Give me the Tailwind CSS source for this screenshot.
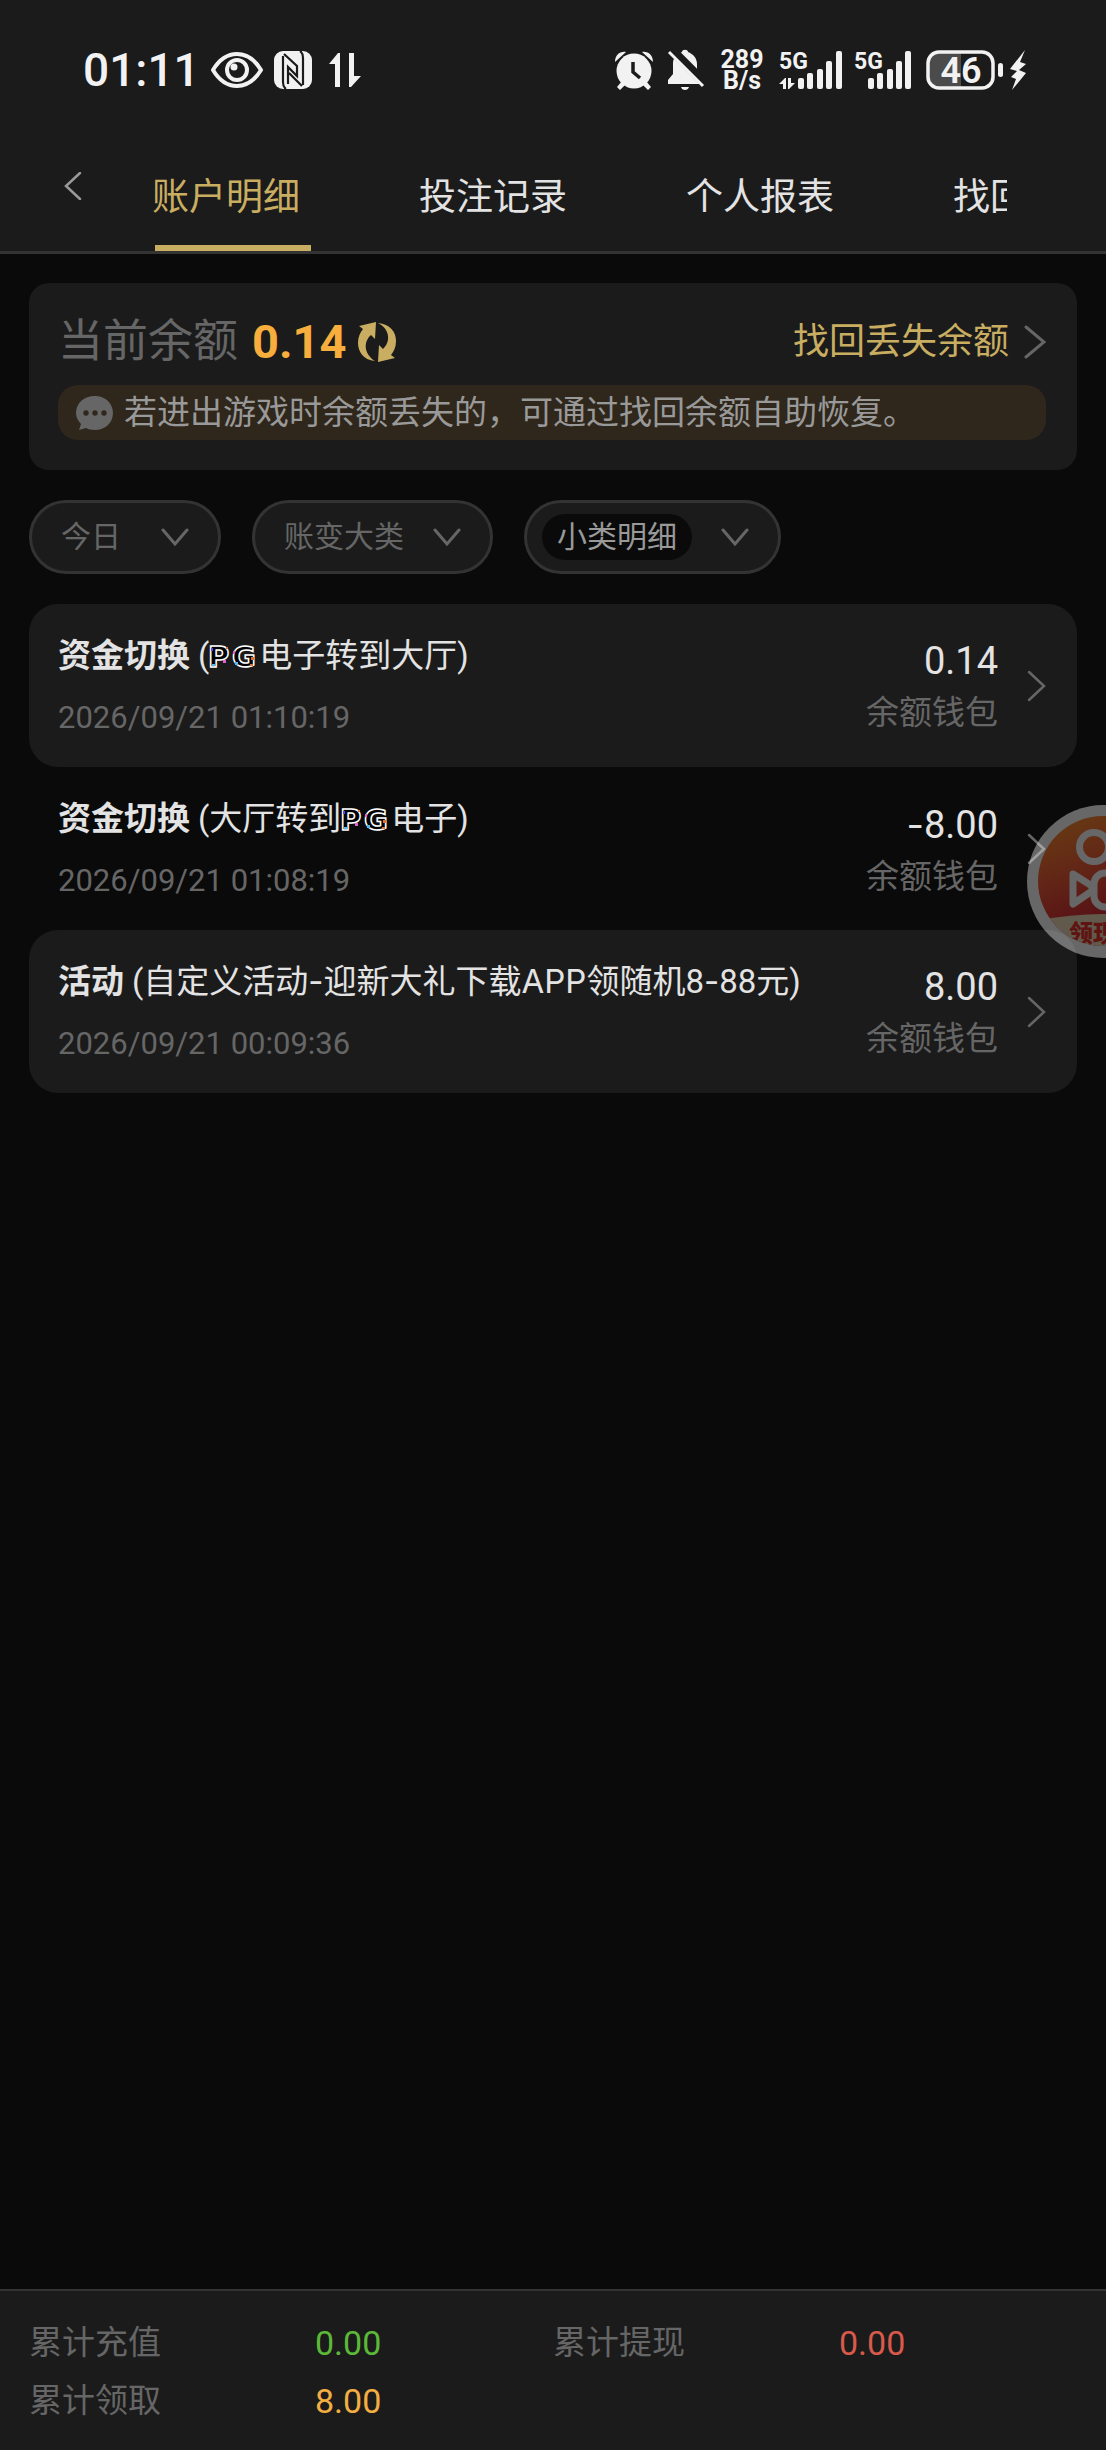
<!DOCTYPE html>
<html lang="zh-CN">
<head>
<meta charset="utf-8">
<meta name="viewport" content="width=device-width, initial-scale=1">
<title>账户明细</title>
<script src="https://cdn.jsdelivr.net/npm/@tailwindcss/browser@4"></script>
</head>
<body class="bg-[#0a0a0a]">
<div class="relative flex min-h-screen flex-col overflow-hidden bg-[#0a0a0a] font-['Roboto','Noto_Sans_CJK_SC',sans-serif] text-[#e3e3e3]">

  <header class="border-b-3 border-[#333333] bg-[#1b1b1b]">
    <!-- Status bar -->
    <div class="flex h-[120px] items-center justify-between pt-[20px] pr-[79px] pl-[83px] text-[#f2f2f2]">
      <div class="flex items-center">
        <span class="w-[128px] text-[46px] leading-[48px] font-medium">01:11</span>
        <svg class="h-[38px] w-[52px]" viewBox="0 0 52 38" fill="none" stroke="currentColor">
          <path d="M2 19C8 9 16 3 26 3s18 6 24 16c-6 10-14 16-24 16S8 29 2 19z" stroke-width="4"/>
          <circle cx="26" cy="19" r="10" stroke-width="4"/>
          <circle cx="23" cy="16" r="3.5" fill="currentColor" stroke="none"/>
        </svg>
        <svg class="ml-[11px] h-[38px] w-[38px]" viewBox="0 0 38 38">
          <rect width="38" height="38" rx="9" fill="currentColor"/>
          <path d="M12 38C9 36 9 34 9 31V5M10 3l13 12v10L14 16v17M26 0c3 2 3 4 3 7v27M28 35L15 22" fill="none" stroke="#1b1b1b" stroke-width="2.200"/>
        </svg>
        <svg class="ml-[17px] h-[36px] w-[32px]" viewBox="0 0 32 36" fill="currentColor">
          <path d="M11 35H6V12H0L9 1h2zM20 1h5v23h7L22 35h-2z"/>
        </svg>
      </div>
      <div class="flex items-center">
        <svg class="h-[40px] w-[38px]" viewBox="0 0 38 40">
          <g fill="currentColor"><circle cx="19" cy="21" r="17.500"/><path d="M7 31l-5 6 3 3 6-6zM31 31l5 6-3 3-6-6zM0 12C0 5 5 1 11 2zM38 12C38 5 33 1 27 2z"/></g>
          <path d="M18 12v10l7 6" fill="none" stroke="#1b1b1b" stroke-width="3.500"/>
        </svg>
        <svg class="ml-[14px] h-[42px] w-[38px]" viewBox="0 0 38 42">
          <g fill="currentColor"><path d="M15 3c0-3 6-3 6 0 5 2 9 6 9 12v10l5 6v4H1v-4l5-6V14c0-5 4-9 9-11zM14 38h8c-1 4-7 4-8 0z"/></g>
          <path d="M4 0l35 35" stroke="#1b1b1b" stroke-width="9"/>
          <path d="M2 3l34 34" stroke="currentColor" stroke-width="3"/>
        </svg>
        <div class="ml-[14px] flex w-[46px] flex-col text-center text-[25px] leading-[21px] font-bold"><span>289</span><span>B/s</span></div>
        <svg class="ml-[14px] h-[40px] w-[64px] overflow-visible" viewBox="0 0 64 40" fill="currentColor">
          <text x="0" y="19" font-size="23" font-weight="700">5G</text>
          <path d="M7 39H4v-5H0l6-6h1zM9 28h3v5h4l-6 6H9z"/>
          <rect x="19" y="28" width="6" height="11" rx="2"/><rect x="28" y="23" width="6" height="16" rx="2"/><rect x="38" y="19" width="6" height="20" rx="2"/><rect x="47" y="11" width="6" height="28" rx="2"/><rect x="57" y="1" width="6" height="38" rx="2"/>
        </svg>
        <svg class="ml-[11px] h-[40px] w-[59px] overflow-visible" viewBox="0 0 59 40" fill="currentColor">
          <text x="0" y="19" font-size="23" font-weight="700">5G</text>
          <rect x="14" y="28" width="6" height="11" rx="2"/><rect x="23" y="23" width="6" height="16" rx="2"/><rect x="33" y="19" width="6" height="20" rx="2"/><rect x="42" y="11" width="6" height="28" rx="2"/><rect x="51" y="1" width="6" height="38" rx="2"/>
        </svg>
        <svg class="ml-[13px] h-[40px] w-[78px] overflow-visible" viewBox="0 0 78 40" fill="currentColor">
          <path d="M35 3v34H14C7 37 3 33 3 26V14C3 7 7 3 14 3z" fill="#4b4b4b"/>
          <rect x="2" y="2" width="65" height="36" rx="11" fill="none" stroke="currentColor" stroke-width="3.500"/>
          <rect x="72" y="13" width="5" height="14" rx="2.500"/>
          <text x="35" y="33" font-size="36" font-weight="600" text-anchor="middle">46</text>
        </svg>
        <svg class="ml-[6px] h-[40px] w-[17px]" viewBox="0 0 17 40" fill="currentColor"><path d="M15 0L0 19l7 2-6 6 5 2L2 40l14-17-7-3 7-6-6-2z"/></svg>
      </div>
    </div>
    <!-- Tabs -->
    <div class="flex h-[131px] pr-[99px]">
      <button type="button" aria-label="返回" class="flex w-[152px] shrink-0 items-center pl-[64px] text-[#999999]">
        <svg class="h-[28px] w-[18px]" viewBox="0 0 18 28" fill="none" stroke="currentColor" stroke-width="2.500" stroke-linecap="round"><path d="M16 1L2 14l14 13"/></svg>
      </button>
      <nav class="flex flex-1 gap-[119px] overflow-hidden text-[37px] leading-[48px] whitespace-nowrap">
        <a href="#" aria-current="page" class="relative flex shrink-0 items-center pt-[24px] text-[#c9ae62]">账户明细<span class="absolute bottom-0 left-[3px] h-[6px] w-[156px] bg-[#c9ae62]"></span></a>
        <a href="#" class="flex shrink-0 items-center pt-[24px]">投注记录</a>
        <a href="#" class="flex shrink-0 items-center pt-[24px]">个人报表</a>
        <a href="#" class="flex shrink-0 items-center pt-[24px]">找回余额</a>
      </nav>
    </div>
  </header>

  <main class="flex flex-col gap-[30px] p-[29px]">
    <!-- Balance -->
    <section class="rounded-[20px] bg-[#1b1b1b] pt-[30px] pr-[31px] pb-[30px] pl-[29px]">
      <div class="flex h-[58px] items-center">
        <h1 class="text-[45px] leading-[58px] text-[#666666]">当前余额</h1>
        <span class="ml-[14px] text-[47px] leading-[58px] font-bold text-[#f7ae3d]">0.14</span>
        <button type="button" aria-label="刷新余额" class="ml-[11px] text-[#c9ae62]">
          <svg class="h-[40px] w-[38px]" viewBox="0 0 38 40" fill="currentColor">
            <path d="M18 0l-1 17-4-4C5 20 6 32 17 39 5 38 0 29 0 21 0 15 2 11 5 7L1 4z"/>
            <path d="M20 40l1-17 4 4c8-7 7-20-5-26 12 1 18 9 18 18 0 6-2 10-5 14l4 3z"/>
          </svg>
        </button>
        <a href="#" class="ml-auto flex items-center gap-[15px] text-[36px] leading-[48px] text-[#c9ae62]">找回丢失余额
          <svg class="h-[34px] w-[22px] text-[#666666]" viewBox="0 0 22 34" fill="none" stroke="currentColor" stroke-width="3" stroke-linecap="round"><path d="M2 2l18 15L2 32"/></svg>
        </a>
      </div>
      <p class="mt-[14px] flex h-[55px] items-center rounded-[20px] bg-[#2f271b] pl-[18px] text-[33px] leading-[48px] text-[#999999]">
        <svg class="mr-[11px] h-[34px] w-[37px] shrink-0" viewBox="0 0 37 34"><path d="M19 0c10 0 18 7 18 17s-8 17-18 17c-4 0-7-1-9-2l-7 2 2-6C2 25 0 21 0 17 0 7 8 0 19 0z" fill="#666666"/><g fill="#2f271b"><circle cx="10" cy="17" r="2.700"/><circle cx="19" cy="17" r="2.700"/><circle cx="28" cy="17" r="2.700"/></g></svg>
        若进出游戏时余额丢失的，可通过找回余额自助恢复。
      </p>
    </section>

    <!-- Filters -->
    <div class="flex gap-[31px] text-[30px] leading-[46px] text-[#666666]">
      <button type="button" class="flex h-[74px] w-[192px] items-center justify-between rounded-[37px] border-3 border-[#333333] bg-[#1b1b1b] pr-[29px] pl-[29px]">今日
        <svg class="h-[18px] w-[28px]" viewBox="0 0 28 18" fill="none" stroke="currentColor" stroke-width="3" stroke-linecap="round"><path d="M2 2l12 14L26 2"/></svg></button>
      <button type="button" class="flex h-[74px] w-[241px] items-center justify-between rounded-[37px] border-3 border-[#333333] bg-[#1b1b1b] pr-[29px] pl-[29px]">账变大类
        <svg class="h-[18px] w-[28px]" viewBox="0 0 28 18" fill="none" stroke="currentColor" stroke-width="3" stroke-linecap="round"><path d="M2 2l12 14L26 2"/></svg></button>
      <button type="button" class="flex h-[74px] w-[257px] items-center justify-between rounded-[37px] border-3 border-[#333333] bg-[#1b1b1b] pr-[29px] pl-[15px]"><span class="rounded-[23px] bg-[#0a0a0a] px-[15px] text-[#999999]">小类明细</span>
        <svg class="h-[18px] w-[28px]" viewBox="0 0 28 18" fill="none" stroke="currentColor" stroke-width="3" stroke-linecap="round"><path d="M2 2l12 14L26 2"/></svg></button>
    </div>

    <!-- Records -->
    <ul class="flex flex-col">
      <li>
        <a href="#" class="flex h-[163px] items-center rounded-[29px] bg-[#1b1b1b] pr-[31px] pl-[29px]">
          <div class="flex flex-1 flex-col gap-[14px] pt-[2px]">
            <div class="flex items-center text-[33px] leading-[48px]"><b class="mr-[8px]">资金切换</b>(<svg class="mr-[2px] h-[26px] w-[48px] overflow-visible font-['DejaVu_Sans']" viewBox="0 0 48 26" role="img" aria-label="PG" fill="#000" stroke="#fff" stroke-width="1.500" font-size="29" font-weight="700"><text x="-1" y="24">P</text><text x="23" y="24">G</text><g stroke="none"><path d="M2 5h2v3H2z" fill="#6a3de8"/><path d="M14 17h3v3h-3zM24 8h2v3h-2z" fill="#e060d8"/><path d="M42 14h3v3h-3zM41 21h3v2h-3zM17 4h2v2h-2z" fill="#e0703a"/><path d="M3 21h3v2H3zM26 19h3v3h-3z" fill="#58b8e8"/></g></svg>电子转到大厅)</div>
            <time class="text-[31px] leading-[48px] text-[#666666]">2026/09/21 01:10:19</time>
          </div>
          <div class="flex flex-col pt-[3px] text-right">
            <span class="text-[38px] leading-[52px]">0.14</span>
            <span class="text-[33px] leading-[52px] text-[#666666]">余额钱包</span>
          </div>
          <svg class="ml-[29px] h-[32px] w-[19px] text-[#666666]" viewBox="0 0 19 32" fill="none" stroke="currentColor" stroke-width="2.500" stroke-linecap="round"><path d="M2 2l15 14L2 30"/></svg>
        </a>
      </li>
      <li>
        <a href="#" class="flex h-[163px] items-center rounded-[29px] pr-[31px] pl-[29px]">
          <div class="flex flex-1 flex-col gap-[14px] pt-[2px]">
            <div class="flex items-center text-[33px] leading-[48px]"><b class="mr-[8px]">资金切换</b>(大厅转到<svg class="mr-[2px] h-[26px] w-[48px] overflow-visible font-['DejaVu_Sans']" viewBox="0 0 48 26" role="img" aria-label="PG" fill="#000" stroke="#fff" stroke-width="1.500" font-size="29" font-weight="700"><text x="-1" y="24">P</text><text x="23" y="24">G</text><g stroke="none"><path d="M2 5h2v3H2z" fill="#6a3de8"/><path d="M14 17h3v3h-3zM24 8h2v3h-2z" fill="#e060d8"/><path d="M42 14h3v3h-3zM41 21h3v2h-3zM17 4h2v2h-2z" fill="#e0703a"/><path d="M3 21h3v2H3zM26 19h3v3h-3z" fill="#58b8e8"/></g></svg>电子)</div>
            <time class="text-[31px] leading-[48px] text-[#666666]">2026/09/21 01:08:19</time>
          </div>
          <div class="flex flex-col pt-[3px] text-right">
            <span class="text-[38px] leading-[52px]"><span class="font-['Inter']">-</span>8.00</span>
            <span class="text-[33px] leading-[52px] text-[#666666]">余额钱包</span>
          </div>
          <svg class="ml-[29px] h-[32px] w-[19px] text-[#666666]" viewBox="0 0 19 32" fill="none" stroke="currentColor" stroke-width="2.500" stroke-linecap="round"><path d="M2 2l15 14L2 30"/></svg>
        </a>
      </li>
      <li>
        <a href="#" class="flex h-[163px] items-center rounded-[29px] bg-[#1b1b1b] pr-[31px] pl-[29px]">
          <div class="flex flex-1 flex-col gap-[14px] pt-[2px]">
            <div class="text-[33px] leading-[48px]"><b class="mr-[8px]">活动</b>(自定义活动<span class="font-['Inter']">-</span>迎新大礼下载<span class="font-['Inter']">APP</span>领随机8<span class="font-['Inter']">-</span>88元)</div>
            <time class="text-[31px] leading-[48px] text-[#666666]">2026/09/21 00:09:36</time>
          </div>
          <div class="flex flex-col pt-[3px] text-right">
            <span class="text-[38px] leading-[52px]">8.00</span>
            <span class="text-[33px] leading-[52px] text-[#666666]">余额钱包</span>
          </div>
          <svg class="ml-[29px] h-[32px] w-[19px] text-[#666666]" viewBox="0 0 19 32" fill="none" stroke="currentColor" stroke-width="2.500" stroke-linecap="round"><path d="M2 2l15 14L2 30"/></svg>
        </a>
      </li>
    </ul>
  </main>

  <!-- Totals -->
  <footer class="mt-auto border-t-2 border-[#333333] bg-[#1b1b1b] px-[29px] pt-[23px] pb-[20px]">
    <dl class="grid grid-cols-2 text-[33px] leading-[58px]">
      <div class="flex"><dt class="w-[286px] text-[#666666]">累计充值</dt><dd class="text-[34px] text-[#5cb838]">0.00</dd></div>
      <div class="flex"><dt class="w-[286px] text-[#666666]">累计提现</dt><dd class="text-[34px] text-[#d9594a]">0.00</dd></div>
      <div class="flex"><dt class="w-[286px] text-[#666666]">累计领取</dt><dd class="text-[34px] text-[#f2ae42]">8.00</dd></div>
    </dl>
  </footer>

  <!-- Floating promo badge -->
  <button type="button" aria-label="领现金" class="absolute top-[805px] -right-[74px] opacity-38">
    <svg class="h-[153px] w-[153px]" viewBox="0 0 153 153">
      <defs>
        <linearGradient id="promo" x1="0.1" y1="0" x2="0.4" y2="0.75"><stop offset="0" stop-color="#ff9a20"/><stop offset="0.5" stop-color="#f5602a"/><stop offset="1" stop-color="#d81f2a"/></linearGradient>
        <clipPath id="disc"><circle cx="76" cy="76" r="65"/></clipPath>
      </defs>
      <circle cx="76.500" cy="76.500" r="76.500" fill="#fff"/>
      <g clip-path="url(#disc)">
        <rect width="153" height="153" fill="url(#promo)"/>
        <path d="M0 118Q76 100 153 118V153H0z" fill="#efdcb8"/>
        <text x="42" y="137" font-size="24" font-weight="900" fill="#e8281e">领现金</text>
      </g>
      <g fill="none" stroke="#fff" stroke-width="7" stroke-linejoin="round">
        <circle cx="67" cy="42" r="14.500"/><circle cx="98" cy="44" r="11"/>
        <rect x="67" y="68" width="44" height="34" rx="11"/>
        <path d="M46 69l19 12v5L46 99z"/>
      </g>
    </svg>
  </button>
</div>
</body>
</html>
